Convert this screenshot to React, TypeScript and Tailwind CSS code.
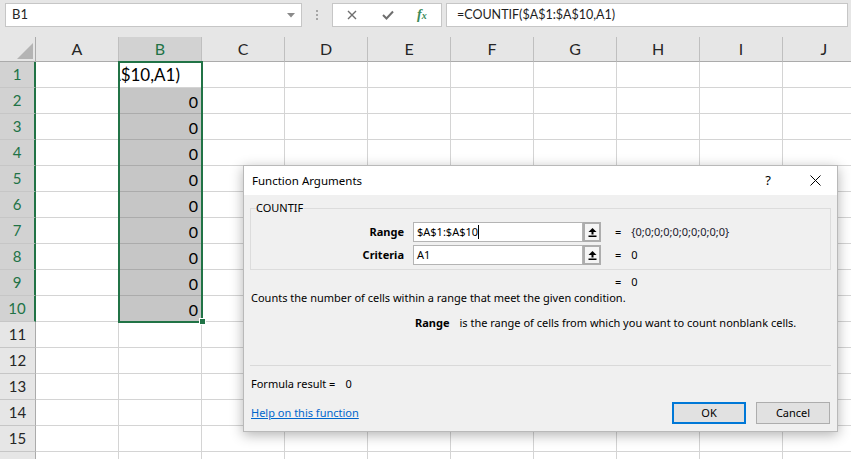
import React from "react";

const COLS = ["A", "B", "C", "D", "E", "F", "G", "H", "I", "J"];
const ROWS = Array.from({ length: 16 }, (_, i) => i + 1);

function UploadIcon() {
  return (
    <svg width="9" height="9" viewBox="0 0 9 9">
      <path d="M4.5 0 L8.5 4 L5.5 4 L5.5 6.5 L3.5 6.5 L3.5 4 L0.5 4 Z" fill="#000" />
      <rect x="0.5" y="7.5" width="8" height="1.5" fill="#000" />
    </svg>
  );
}

function FormulaBar() {
  return (
    <div className="relative h-[37px] bg-[#e6e6e6] flex items-start pt-[3px]" style={{ fontFamily: "Lato, sans-serif" }}>
      {/* name box */}
      <div className="ml-[5px] w-[297px] h-[24px] bg-white border border-[#c6c6c6] flex items-center justify-between pl-[6px] pr-[6px]">
        <span className="text-[13px] text-[#262626]">B1</span>
        <svg width="8" height="5" viewBox="0 0 8 5">
          <path d="M0 0 L8 0 L4 4.5 Z" fill="#8a8a8a" />
        </svg>
      </div>
      {/* grip dots */}
      <div className="w-[30px] h-[24px] flex flex-col items-center justify-center gap-[2px]">
        <span className="w-[2px] h-[2px] bg-[#a6a6a6]" />
        <span className="w-[2px] h-[2px] bg-[#a6a6a6]" />
        <span className="w-[2px] h-[2px] bg-[#a6a6a6]" />
      </div>
      {/* cancel / enter / fx */}
      <div className="w-[110px] h-[24px] bg-white border border-[#c6c6c6] flex items-center">
        <svg className="ml-[14px]" width="10" height="10" viewBox="0 0 10 10">
          <path d="M1 1 L9 9 M9 1 L1 9" stroke="#6e6e6e" strokeWidth="1.4" />
        </svg>
        <svg className="ml-[25px]" width="12" height="10" viewBox="0 0 12 10">
          <path d="M1 5 L4.5 8.5 L11 1.5" stroke="#6e6e6e" strokeWidth="2" fill="none" />
        </svg>
        <span
          className="ml-[23px] text-[14px] italic font-bold text-[#3a8a5a] leading-none"
          style={{ fontFamily: "'Liberation Serif', serif" }}
        >
          f<span className="text-[10px]">x</span>
        </span>
      </div>
      {/* formula input */}
      <div className="ml-[4px] w-[402px] h-[24px] bg-white border border-[#c6c6c6] flex items-center pl-[10px]">
        <span className="text-[12.5px] text-[#1e1e1e]">=COUNTIF($A$1:$A$10,A1)</span>
      </div>
    </div>
  );
}

function Sheet() {
  return (
    <div className="relative" style={{ fontFamily: "Lato, sans-serif" }}>
      <div className="grid grid-cols-[36px_repeat(10,83px)] grid-rows-[25px_repeat(16,26px)]">
        {/* corner */}
        <div className="relative bg-[#e6e6e6] border-r border-b border-[#ababab]">
          <svg className="absolute right-[2px] bottom-[2px]" width="16" height="16" viewBox="0 0 16 16">
            <path d="M16 0 L16 16 L0 16 Z" fill="#b4b4b4" />
          </svg>
        </div>
        {COLS.map((c) => (
          <div
            key={c}
            className={
              c === "B"
                ? "bg-[#d2d2d2] text-[#217346] border-r border-b border-r-[#bfbfbf] border-b-[#ababab] flex items-center justify-center text-[16px]"
                : "bg-[#e6e6e6] text-[#262626] border-r border-b border-r-[#bfbfbf] border-b-[#ababab] flex items-center justify-center text-[16px]"
            }
          >
            {c}
          </div>
        ))}
        {ROWS.map((r) => (
          <React.Fragment key={r}>
            <div
              className={
                r <= 10
                  ? "bg-[#d2d2d2] text-[#217346] border-r-2 border-b border-r-[#217346] border-b-[#c6c6c6] flex items-center justify-center text-[15px]"
                  : "bg-[#e6e6e6] text-[#262626] border-r border-b border-r-[#ababab] border-b-[#c6c6c6] flex items-center justify-center text-[15px]"
              }
            >
              {r < 16 ? r : ""}
            </div>
            {COLS.map((c) => {
              if (c === "B" && r === 1) {
                return (
                  <div
                    key={c}
                    className="bg-white border-r border-b border-[#d4d4d4] flex items-center justify-end overflow-hidden whitespace-nowrap pr-[21px] pt-[1px] text-[17px] text-black"
                  >
                    <span className="shrink-0">=COUNTIF($A$1:$A$10,A1)</span>
                  </div>
                );
              }
              if (c === "B" && r <= 10) {
                return (
                  <div
                    key={c}
                    className="bg-[#c6c6c6] border-r border-b border-r-[#d4d4d4] border-b-[#ababab] flex items-center justify-end pr-[3px] pt-[2px] text-[16px] text-black"
                  >
                    0
                  </div>
                );
              }
              return <div key={c} className="bg-white border-r border-b border-[#d4d4d4]" />;
            })}
          </React.Fragment>
        ))}
      </div>
      {/* selection B1:B10 */}
      <div className="absolute left-[118px] top-[24px] w-[85px] h-[262px] border-2 border-[#217346] pointer-events-none" />
      <div className="absolute left-[199px] top-[281px] w-[7px] h-[7px] bg-[#217346] border border-white" />
    </div>
  );
}

function Dialog() {
  return (
    <div
      className="absolute left-[243px] top-[165px] w-[595px] h-[267px] bg-[#f0f0f0] border border-[#b9b9b9] shadow-[0_3px_12px_rgba(0,0,0,0.3)] flex flex-col text-[11px] text-black"
      style={{ fontFamily: "'Noto Sans', sans-serif" }}
    >
      {/* title bar */}
      <div className="h-[29px] bg-white flex items-center pl-[8px] shrink-0">
        <span className="text-[11.5px]">Function Arguments</span>
        <span className="ml-auto text-[13px] mr-[39px]">?</span>
        <svg className="mr-[16px]" width="11" height="11" viewBox="0 0 11 11">
          <path d="M0.5 0.5 L10.5 10.5 M10.5 0.5 L0.5 10.5" stroke="#000" strokeWidth="1" />
        </svg>
      </div>

      {/* COUNTIF group */}
      <div className="relative mt-[13px] mx-[6px] h-[62px] border border-[#dcdcdc] pt-[13px]">
        <span className="absolute -top-[9px] left-[5px] bg-[#f0f0f0] pr-[1px] leading-[16px]">COUNTIF</span>
        <div className="flex items-center h-[20px]">
          <span className="w-[153px] text-right font-bold">Range</span>
          <div className="ml-[9px] w-[170px] h-[20px] bg-white border border-[#b4b4b4] flex items-center pl-[3px]">
            <span>$A$1:$A$10</span>
            <span className="w-px h-[14px] bg-black" />
          </div>
          <div className="w-[18px] h-[20px] border-2 border-[#adadad] bg-[#f5f5f5] flex items-center justify-center">
            <UploadIcon />
          </div>
          <span className="ml-[14px]">=</span>
          <span className="ml-[10px] text-[#1a1a2e]">{"{0;0;0;0;0;0;0;0;0;0}"}</span>
        </div>
        <div className="flex items-center h-[20px] mt-[3px]">
          <span className="w-[153px] text-right font-bold">Criteria</span>
          <div className="ml-[9px] w-[170px] h-[20px] bg-white border border-[#b4b4b4] flex items-center pl-[3px]">
            <span>A1</span>
          </div>
          <div className="w-[18px] h-[20px] border-2 border-[#adadad] bg-[#f5f5f5] flex items-center justify-center">
            <UploadIcon />
          </div>
          <span className="ml-[14px]">=</span>
          <span className="ml-[10px]">0</span>
        </div>
      </div>

      <div className="mt-[4px] h-[16px] flex items-center pl-[371px]">
        <span>=</span>
        <span className="ml-[10px]">0</span>
      </div>
      <div className="h-[16px] flex items-center pl-[7px]">
        Counts the number of cells within a range that meet the given condition.
      </div>
      <div className="mt-[9px] h-[16px] flex items-center pl-[171px]">
        <span className="font-bold">Range</span>
        <span className="ml-[10px]">is the range of cells from which you want to count nonblank cells.</span>
      </div>

      <div className="mt-[34px] mx-[6px] h-px bg-[#d9d9d9]" />

      <div className="mt-[10px] h-[16px] flex items-center pl-[7px]">
        <span>Formula result =</span>
        <span className="ml-[10px]">0</span>
      </div>

      <div className="mt-[10px] flex items-center pl-[7px] pr-[7px]">
        <span className="text-[#0066cc] underline">Help on this function</span>
        <button className="ml-auto w-[74px] h-[22px] bg-[#e1e1e1] border-2 border-[#0078d7] flex items-center justify-center">
          OK
        </button>
        <button className="ml-[10px] w-[74px] h-[22px] bg-[#e1e1e1] border border-[#adadad] flex items-center justify-center">
          Cancel
        </button>
      </div>
    </div>
  );
}

export default function App() {
  return (
    <div className="relative w-[851px] h-[459px] overflow-hidden bg-white">
      <FormulaBar />
      <Sheet />
      <Dialog />
    </div>
  );
}
